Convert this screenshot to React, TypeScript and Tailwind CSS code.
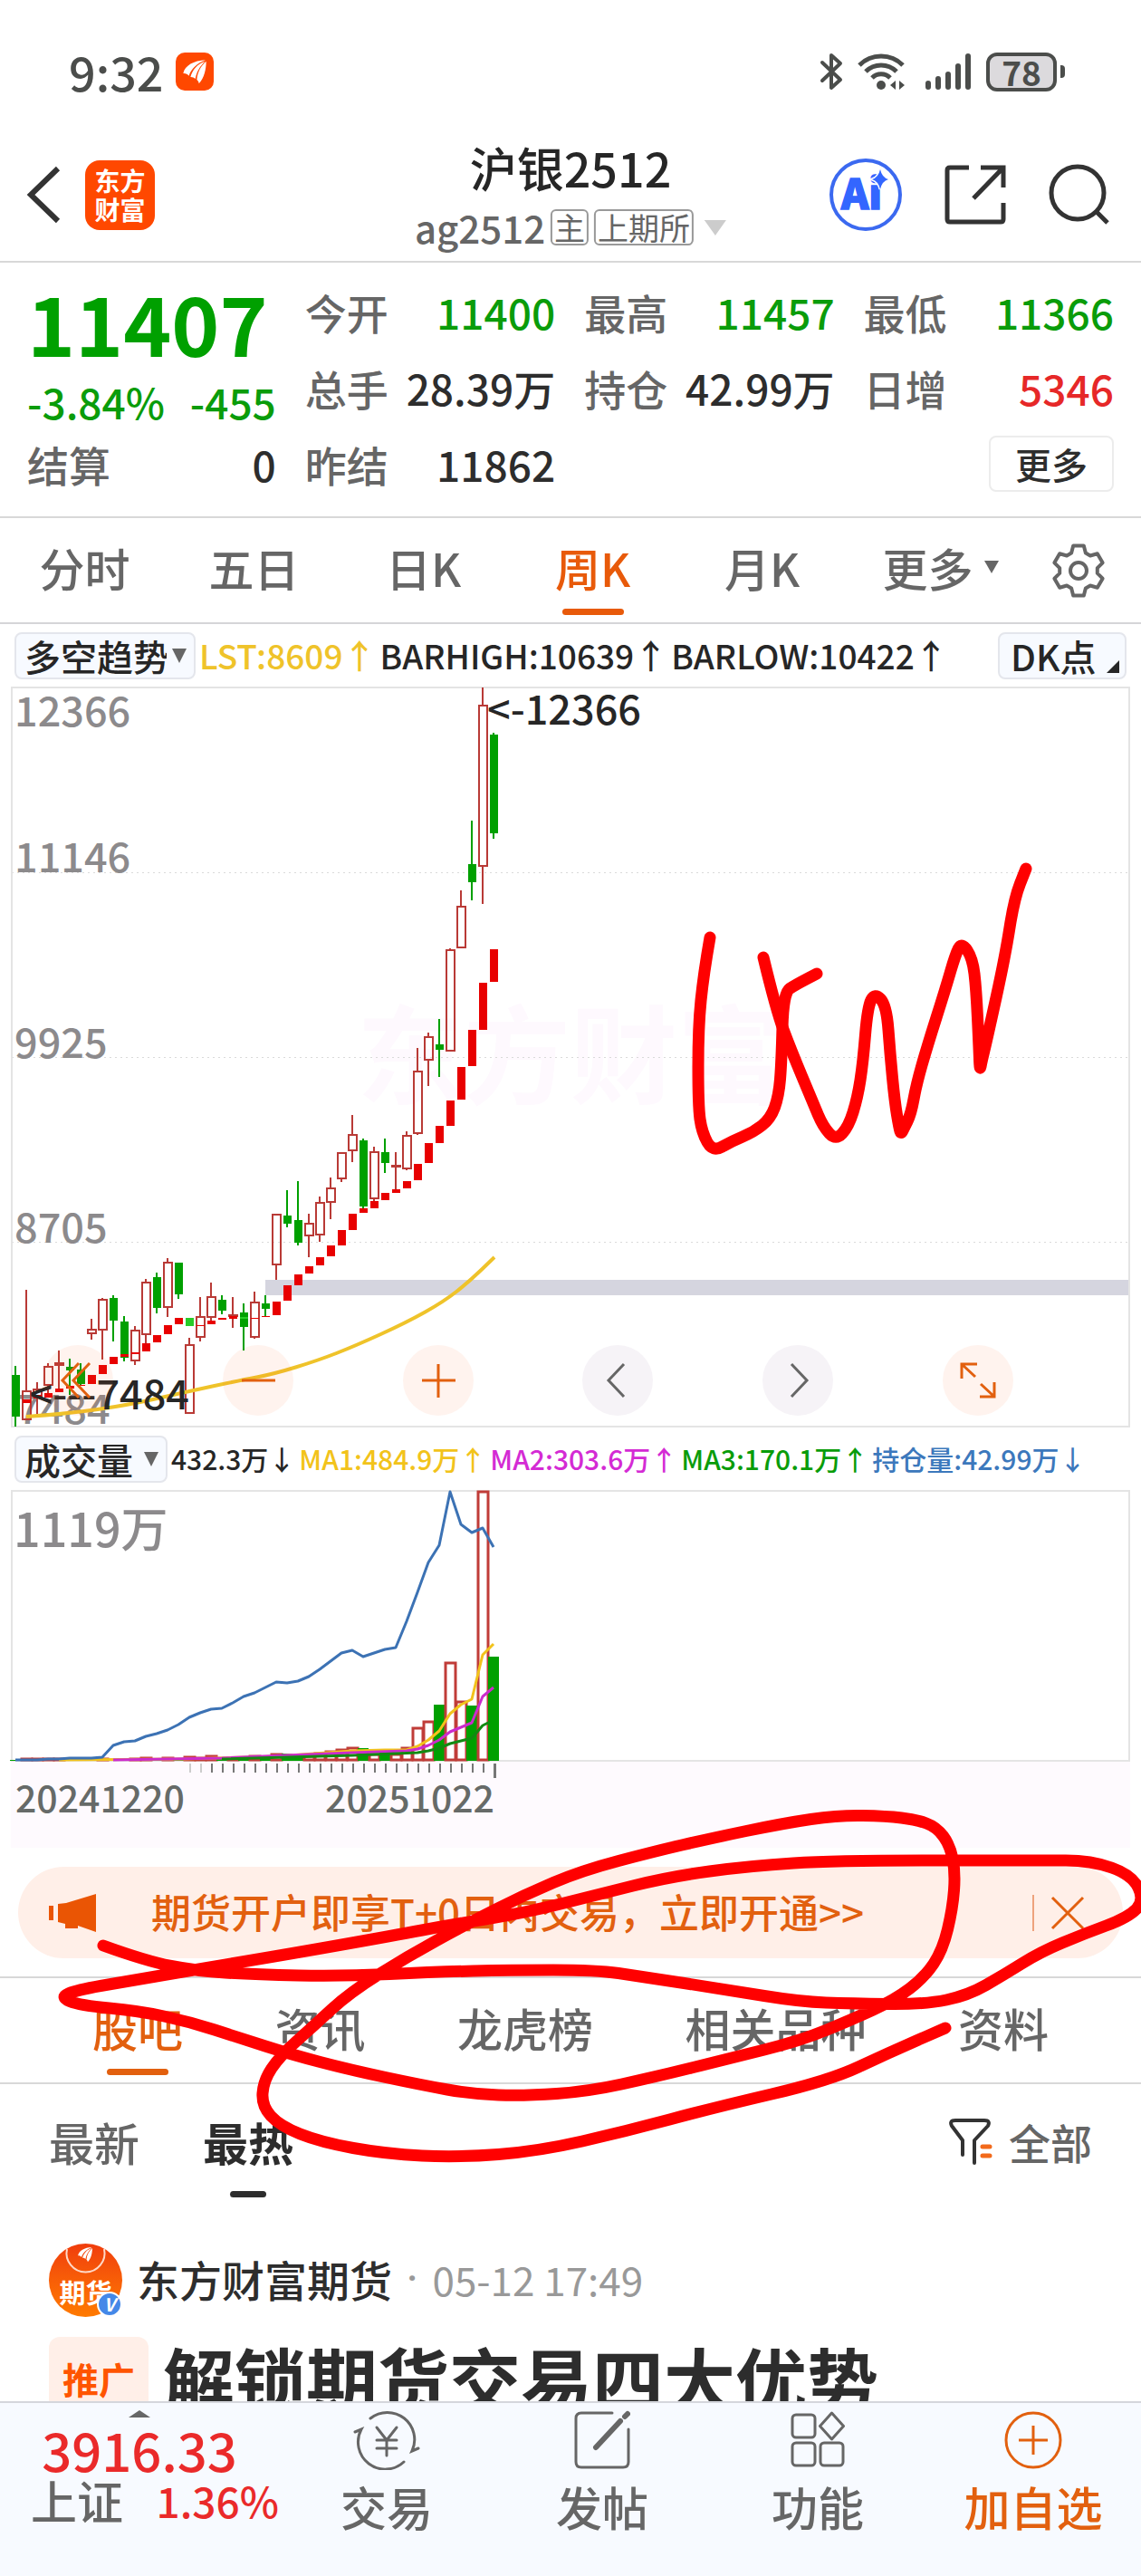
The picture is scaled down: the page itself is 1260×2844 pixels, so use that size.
import React, { useState } from 'react';

type Point = [number, number];
// color, high, body top, body bottom, low (chart y)
type Candle = ['r' | 'g', number, number, number, number];

const STEP = 12;
const FIRST_X = 17;

const candles: Candle[] = [
  ['g', 1508, 1518, 1564, 1575],
  ['r', 1424, 1535, 1568, 1568],
  ['r', 1526, 1533, 1543, 1561],
  ['r', 1505, 1508, 1530, 1538],
  ['r', 1491, 1504, 1508, 1533],
  ['g', 1500, 1509, 1513, 1540],
  ['g', 1505, 1512, 1528, 1530],
  ['r', 1456, 1467, 1473, 1479],
  ['r', 1433, 1434, 1469, 1501],
  ['g', 1430, 1433, 1458, 1481],
  ['g', 1453, 1459, 1499, 1503],
  ['r', 1464, 1468, 1503, 1507],
  ['r', 1412, 1415, 1474, 1483],
  ['g', 1405, 1410, 1444, 1450],
  ['r', 1389, 1393, 1444, 1454],
  ['g', 1394, 1394, 1429, 1434],
  ['r', 1477, 1484, 1561, 1561],
  ['r', 1432, 1453, 1477, 1481],
  ['r', 1416, 1431, 1455, 1458],
  ['g', 1430, 1435, 1447, 1451],
  ['r', 1432, 1451, 1454, 1466],
  ['g', 1439, 1449, 1465, 1491],
  ['r', 1426, 1437, 1477, 1478],
  ['g', 1430, 1439, 1445, 1453],
  ['r', 1340, 1340, 1397, 1413],
  ['g', 1314, 1342, 1351, 1355],
  ['g', 1304, 1347, 1372, 1375],
  ['r', 1340, 1350, 1365, 1388],
  ['r', 1321, 1327, 1364, 1371],
  ['r', 1300, 1311, 1328, 1346],
  ['r', 1272, 1272, 1302, 1305],
  ['r', 1231, 1252, 1271, 1283],
  ['g', 1257, 1259, 1332, 1335],
  ['r', 1266, 1271, 1324, 1328],
  ['g', 1257, 1272, 1284, 1295],
  ['r', 1272, 1286, 1288, 1313],
  ['r', 1249, 1253, 1291, 1292],
  ['r', 1157, 1182, 1252, 1253],
  ['r', 1140, 1144, 1171, 1199],
  ['g', 1125, 1153, 1159, 1189],
  ['r', 1047, 1048, 1161, 1161],
  ['r', 983, 1000, 1047, 1047],
  ['g', 906, 954, 974, 994],
  ['r', 759, 778, 957, 998],
  ['g', 809, 811, 920, 926],
];

// trend blocks, starting at the second week
const trend: Point[] = [
  [1545, 1549], [1540, 1544], [1538, 1543], [1533, 1537], [1530, 1533], [1529, 1530],
  [1518, 1528], [1507, 1517], [1498, 1506], [1495, 1498], [1493, 1495], [1483, 1492],
  [1474, 1482], [1463, 1473], [1455, 1462], [1455, 1464], [1463, 1464], [1458, 1462],
  [1455, 1457], [1453, 1456], [1454, 1456], [1455, 1456], [1453, 1454], [1437, 1452],
  [1419, 1436], [1407, 1419], [1398, 1406], [1388, 1397], [1375, 1387], [1358, 1375],
  [1340, 1358], [1334, 1339], [1326, 1334], [1317, 1325], [1313, 1317], [1304, 1312],
  [1285, 1303], [1262, 1284], [1243, 1262], [1215, 1243], [1178, 1214], [1137, 1177],
  [1085, 1137], [1048, 1084],
];

const lst: Point[] = [
  [29, 1564], [73, 1561], [143, 1551], [204, 1537], [265, 1524], [302, 1517], [351, 1502],
  [392, 1486], [449, 1460], [490, 1437], [518, 1415], [546, 1388],
];

const volumes = [
  1943, 1942, 1942, 1942, 1942, 1943, 1943, 1943, 1942, 1942, 1942, 1942, 1941, 1942, 1941,
  1942, 1940, 1941, 1939, 1940, 1941, 1940, 1939, 1941, 1937, 1936, 1938, 1939, 1936, 1934,
  1932, 1930, 1930, 1937, 1935, 1937, 1930, 1908, 1901, 1882, 1836, 1879, 1883, 1647, 1829,
];

const holding = [
  1943, 1943, 1943, 1942, 1942, 1941, 1941, 1941, 1940, 1927, 1923, 1922, 1917, 1914, 1910,
  1904, 1896, 1891, 1887, 1886, 1880, 1873, 1869, 1863, 1857, 1858, 1856, 1851, 1843, 1834,
  1825, 1822, 1829, 1825, 1821, 1819, 1790, 1758, 1725, 1706, 1647, 1683, 1692, 1687, 1708,
];

const volumeMa: { color: string; points: Point[] }[] = [
  {
    color: '#f2c31b',
    points: [[65, 1943], [200, 1942], [305, 1939], [389, 1933], [425, 1932], [449, 1932], [461, 1928], [473, 1921],
      [485, 1911], [497, 1892], [509, 1882], [521, 1876], [533, 1827], [545, 1815]],
  },
  {
    color: '#cc2bcc',
    points: [[125, 1943], [245, 1941], [389, 1935], [449, 1933], [461, 1931], [473, 1927], [485, 1921],
      [497, 1912], [509, 1907], [521, 1902], [533, 1873], [545, 1863]],
  },
  {
    color: '#128a12',
    points: [[245, 1942], [389, 1938], [461, 1935], [473, 1933], [485, 1930], [497, 1925], [509, 1922],
      [521, 1919], [533, 1905], [541, 1901]],
  },
];

const strokes: Point[][] = [
  [[784, 1035], [777, 1075], [771, 1134], [771, 1221], [775, 1250], [787, 1272], [808, 1260], [832, 1250],
    [851, 1235], [860, 1210], [863, 1173], [865, 1096], [879, 1087], [902, 1075]],
  [[843, 1057], [857, 1115], [873, 1158], [898, 1218], [909, 1244], [923, 1259], [937, 1244], [947, 1212],
    [953, 1173], [958, 1112], [966, 1096], [979, 1110], [983, 1164], [988, 1216], [993, 1246], [995, 1252],
    [998, 1246], [1006, 1230], [1012, 1197], [1024, 1155], [1044, 1092], [1055, 1054], [1062, 1040],
    [1074, 1058], [1078, 1092], [1081, 1155], [1082, 1183], [1084, 1172], [1090, 1147], [1110, 1056],
    [1120, 992], [1133, 959]],
  [[114, 2148], [161, 2165], [217, 2176], [281, 2180], [378, 2182], [482, 2177], [563, 2175], [659, 2175],
    [707, 2182], [804, 2197], [884, 2210], [940, 2212], [1021, 2213], [1069, 2203], [1109, 2180],
    [1149, 2155], [1197, 2135], [1246, 2117], [1264, 2098], [1250, 2070], [1205, 2054], [1149, 2054],
    [924, 2054], [828, 2060], [739, 2072], [659, 2092], [579, 2112], [498, 2125], [434, 2137], [321, 2157],
    [225, 2173], [137, 2188], [85, 2197], [66, 2205], [88, 2214], [153, 2220], [209, 2232], [265, 2250],
    [321, 2268], [386, 2285], [466, 2302], [522, 2312], [579, 2314], [650, 2309], [723, 2293], [804, 2273],
    [884, 2253], [940, 2230], [988, 2208], [1021, 2183], [1041, 2153], [1052, 2107], [1055, 2067],
    [1049, 2037], [1034, 2017], [1012, 2009], [979, 2005], [926, 2004], [865, 2013], [783, 2030],
    [723, 2044], [643, 2065], [579, 2092], [514, 2125], [450, 2160], [386, 2200], [346, 2237], [309, 2270],
    [291, 2297], [289, 2325], [309, 2347], [354, 2365], [426, 2378], [506, 2382], [595, 2375], [691, 2353],
    [788, 2327], [916, 2297], [980, 2267], [1044, 2239]],
];

const smooth = (points: Point[]) => {
  let d = `M${points[0][0]} ${points[0][1]}`;
  for (let i = 1; i < points.length - 1; i++) {
    const [x, y] = points[i];
    const [nx, ny] = points[i + 1];
    d += ` Q${x} ${y} ${(x + nx) / 2} ${(y + ny) / 2}`;
  }
  const last = points[points.length - 1];
  return `${d} L${last[0]} ${last[1]}`;
};

const polyline = (points: Point[]) => points.map((p) => p.join(',')).join(' ');

const quotes = [
  { label: '今开', value: '11400', color: 'text-[#0a9c0a]' },
  { label: '最高', value: '11457', color: 'text-[#0a9c0a]' },
  { label: '最低', value: '11366', color: 'text-[#0a9c0a]' },
  { label: '总手', value: '28.39万', color: 'text-[#2d2d2d]' },
  { label: '持仓', value: '42.99万', color: 'text-[#2d2d2d]' },
  { label: '日增', value: '5346', color: 'text-[#e62828]' },
  { label: '昨结', value: '11862', color: 'text-[#2d2d2d]' },
];

const periods = ['分时', '五日', '日K', '周K', '月K'];
const sections = ['股吧', '资讯', '龙虎榜', '相关品种', '资料'];

const Flame = ({ className }: { className: string }) => (
  <svg viewBox="0 0 24 24" className={className} fill="#fff" aria-hidden="true">
    <path d="M2.5 13.5C4 7 11 3 21 2.5 14 5 9 10 7.2 15.500 6 14 4.500 13.300 2.500 13.500z" />
    <path d="M8.500 16.500C10 10.500 14.500 5.500 20.500 3.500 16.500 7.500 13.500 12 12.500 18 11.500 17 10 16.400 8.500 16.500z" />
    <path d="M13.800 18.800C14.200 12.500 17 7.500 21.500 3.500 21.500 10 20 17 15.500 22 15.500 20.800 14.800 19.600 13.800 18.800z" />
  </svg>
);

const Caret = ({ className }: { className: string }) => (
  <svg viewBox="0 0 16 14" preserveAspectRatio="none" className={className} fill="currentColor" aria-hidden="true">
    <path d="M0 0h16L8 14z" />
  </svg>
);

const Gear = () => {
  const points: string[] = [];
  for (let k = 0; k < 6; k++) {
    [[-22, 21], [-12, 28], [12, 28], [22, 21]].forEach(([offset, r]) => {
      const a = ((k * 60 - 90 + offset) * Math.PI) / 180;
      points.push(`${30 + r * Math.cos(a)},${30 + r * Math.sin(a)}`);
    });
  }
  return (
    <svg viewBox="0 0 60 60" className="size-[60px]" fill="none" stroke="#666" strokeWidth="4" strokeLinejoin="round">
      <polygon points={points.join(' ')} />
      <circle cx="30" cy="30" r="9" />
    </svg>
  );
};

const StatusBar = () => (
  <div className="flex h-[158px] items-center justify-between pr-[84px] pl-[76px]">
    <div className="flex items-center gap-[14px]">
      <span className="text-[52px] leading-[64px] text-[#4b4d4b]">9:32</span>
      <span className="flex size-[42px] items-center justify-center rounded-[10px] bg-[#ff4800]">
        <Flame className="size-[32px]" />
      </span>
    </div>
    <div className="flex items-center text-[#4b4d4b]">
      <svg viewBox="0 0 26 42" className="mr-4 h-[42px] w-[26px]" fill="none" stroke="currentColor" strokeWidth="4" strokeLinecap="round" strokeLinejoin="round">
        <path d="M3 11l20 19-10 9V3l10 9L3 31" />
      </svg>
      <svg viewBox="0 0 52 42" className="mr-[22px] h-[42px] w-[52px]" fill="none" stroke="currentColor" strokeWidth="5">
        <path d="M2 14a34 34 0 0 1 48 0" />
        <path d="M9 21a24 24 0 0 1 34 0" />
        <path d="M16 28a14 14 0 0 1 20 0" />
        <circle cx="26" cy="36" r="5" fill="currentColor" stroke="none" />
        <path d="M42 31v10l-6-5zM46 41V31l6 5z" fill="currentColor" stroke="none" />
      </svg>
      <svg viewBox="0 0 52 42" className="mr-4 h-[42px] w-[52px]" stroke="currentColor" strokeWidth="6" strokeLinecap="round">
        <path d="M4 34v4M15 29v9M26 24v14M37 15v23M48 4v34" />
      </svg>
      <span className="flex h-[43px] w-[78px] items-center justify-center rounded-[12px] border-[4px] border-current bg-[#dcdadd] text-[37px] leading-[36px] font-bold">
        78
      </span>
      <span className="ml-1 h-[14px] w-[5px] rounded-r bg-current" />
    </div>
  </div>
);

const Header = () => (
  <header className="relative flex h-[132px] items-center justify-between border-b-2 border-[#d8d8d8] pr-[35px] pb-4 pl-[26px]">
    <div className="flex items-center gap-6">
      <button aria-label="返回">
        <svg viewBox="0 0 44 64" className="h-[64px] w-[44px]" fill="none" stroke="#333" strokeWidth="6">
          <path d="M38 3L8 32l30 29" />
        </svg>
      </button>
      <span className="flex size-[77px] flex-col items-center justify-center rounded-[16px] bg-[#ff4800] text-[28px] leading-[32px] font-bold text-white">
        <span>东方</span>
        <span>财富</span>
      </span>
    </div>
    <div className="absolute top-[-7px] left-1/2 flex -translate-x-1/2 flex-col items-center whitespace-nowrap">
      <h1 className="text-[52px] leading-[68px] text-[#262626]">沪银2512</h1>
      <button className="flex items-center text-[42px] leading-[64px] text-[#666]">
        ag2512
        <span className="ml-[6px] rounded-[6px] border-2 border-[#999] px-[2px] text-[34px] leading-[36px] font-normal">主</span>
        <span className="ml-[6px] rounded-[6px] border-2 border-[#999] px-[2px] text-[34px] leading-[36px] font-normal">上期所</span>
        <Caret className="ml-3 h-[17px] w-[24px] text-[#ccc]" />
      </button>
    </div>
    <div className="flex items-center gap-[46px]">
      <button aria-label="Ai">
        <svg viewBox="0 0 82 82" className="size-[82px]">
          <circle cx="41" cy="41" r="38" fill="none" stroke="#3b69f0" strokeWidth="4" />
          <text x="14" y="57" fontSize="46" fontWeight="900" fill="#3366ff" stroke="#3366ff" strokeWidth="1.500">Ai</text>
          <path d="M57 13q2 9 9 11-7 2-9 11-2-9-9-11 7-2 9-11z" fill="#3366ff" stroke="#fff" strokeWidth="3" paintOrder="stroke" />
        </svg>
      </button>
      <button aria-label="分享">
        <svg viewBox="0 0 68 68" className="size-[68px]" fill="none" stroke="#333" strokeWidth="5">
          <path d="M27 4H6q-3 0-3 3v54q0 3 3 3h56q3 0 3-3V43M40 4h25v22M65 4L32 38" />
        </svg>
      </button>
      <button aria-label="搜索">
        <svg viewBox="0 0 68 68" className="size-[68px]" fill="none" stroke="#333" strokeWidth="5">
          <circle cx="33" cy="32" r="29" />
          <path d="M53 52l13 13" />
        </svg>
      </button>
    </div>
  </header>
);

const Quote = () => (
  <section className="flex gap-8 border-b-2 border-[#d8d8d8] px-[30px] pt-3 pb-4 text-[46px] text-[#666]">
    <div className="min-w-0 flex-1">
      <div className="text-[90px] leading-[106px] font-bold text-[#00a000]">11407</div>
      <div className="flex justify-between leading-[70px] whitespace-nowrap text-[#0a9c0a]">
        <span>-3.84%</span>
        <span>-455</span>
      </div>
      <dl className="flex justify-between leading-[68px]">
        <dt>结算</dt>
        <dd className="text-[#2d2d2d]">0</dd>
      </dl>
    </div>
    <div className="grid min-w-0 flex-[3.25] grid-cols-3 gap-x-8">
      {quotes.map((item) => (
        <dl key={item.label} className="flex justify-between leading-[84px] whitespace-nowrap">
          <dt>{item.label}</dt>
          <dd className={item.color}>{item.value}</dd>
        </dl>
      ))}
      <div className="col-start-3 flex items-center justify-end">
        <button className="h-[62px] w-[138px] rounded-[8px] border-2 border-[#ececec] text-[40px] leading-[56px] text-[#2d2d2d]">更多</button>
      </div>
    </div>
  </section>
);

const Periods = () => {
  const [active, setActive] = useState('周K');
  return (
    <nav className="grid grid-cols-[repeat(6,1fr)_138px] border-b-2 border-[#d5d5d8] text-[50px] leading-[108px] text-[#666]">
      {periods.map((p) => (
        <button key={p} onClick={() => setActive(p)} className={`flex h-[115px] flex-col items-center ${p === active ? 'text-[#e85a0a]' : ''}`}>
          {p}
          <span className={`-mt-2 h-[7px] w-[68px] shrink-0 rounded-full ${p === active ? 'bg-[#e85a0a]' : ''}`} />
        </button>
      ))}
      <button className="flex h-[108px] items-center justify-center gap-3 pl-5">
        更多
        <Caret className="h-[14px] w-[16px]" />
      </button>
      <button aria-label="设置" className="flex items-center justify-center">
        <Gear />
      </button>
    </nav>
  );
};

const ChartButton = ({ label, d, gray }: { label: string; d: string; gray?: boolean }) => (
  <button aria-label={label} className={`size-[78px] rounded-full ${gray ? 'bg-[#f6f3f7]' : 'bg-[#ff6420]/8'}`}>
    <svg viewBox="0 0 78 78" className="size-full" fill="none" stroke={gray ? '#666' : '#e2600f'} strokeWidth="3">
      <path d={d} />
    </svg>
  </button>
);

const PriceChart = () => (
  <div className="relative">
    <svg viewBox="0 758 1260 818" className="block w-full" fontSize="45">
      <text x="630" y="1210" fontSize="118" fontWeight="700" textAnchor="middle" fill="#fef9fe">东方财富</text>
      <g stroke="#dadada" strokeDasharray="2 4">
        <path d="M13 963.500H1247M13 1167.500H1247M13 1371.500H1247" />
      </g>
      <rect x="13" y="759" width="1234" height="816" fill="none" stroke="#e4e4e4" strokeWidth="2" />
      <g fill="#8c8a8c">
        <text x="16" y="802">12366</text>
        <text x="16" y="963">11146</text>
        <text x="16" y="1168">9925</text>
        <text x="16" y="1372">8705</text>
        <text x="19" y="1572">7484</text>
      </g>
      <rect x="293" y="1413" width="953" height="17" fill="#d5d5df" />
      {candles.map(([color, high, top, bottom, low], i) => {
        const x = FIRST_X + i * STEP;
        return color === 'g' ? (
          <g key={i} fill="#00a000">
            <rect x={x - 1} y={high} width="2" height={low - high} />
            <rect x={x - 4} y={top} width="9" height={bottom - top} />
          </g>
        ) : (
          <g key={i} stroke="#b93a36" strokeWidth="2" fill="none">
            <path d={`M${x} ${high}V${top}M${x} ${bottom}V${low}`} />
            <rect x={x - 4} y={top + 1} width="9" height={Math.max(bottom - top - 2, 1)} />
          </g>
        );
      })}
      {trend.map(([top, bottom], i) => (
        <rect key={i} x={FIRST_X + (i + 1) * STEP - 4} y={top} width="9" height={bottom - top} fill={i === 15 || i === 20 ? '#28cc28' : '#e80000'} />
      ))}
      <path d={smooth(lst)} fill="none" stroke="#efc32a" strokeWidth="4" />
      <g fill="#262626">
        <text x="538" y="800">&lt;-12366</text>
        <text x="209" y="1556" textAnchor="end">&lt;---7484</text>
      </g>
    </svg>
    <div className="absolute right-[141px] bottom-[13px] left-[47px] flex justify-between">
      <ChartButton label="最早" d="M40 20L22 39l18 19M52 20L34 39l18 19" />
      <ChartButton label="缩小" d="M21 39h37" />
      <ChartButton label="放大" d="M21 39h37M39 21v37" />
      <ChartButton label="左移" d="M46 21L29 39l17 18" gray />
      <ChartButton label="右移" d="M32 21l17 18-17 18" gray />
      <ChartButton label="全屏" d="M36 35L22 22M21 37V21h17M42 43l14 13M57 41v16H41" />
    </div>
  </div>
);

const VolumeChart = () => (
  <svg viewBox="0 1645 1260 395" className="block w-full">
    <rect x="12" y="1945" width="1236" height="95" fill="#fefafe" />
    <rect x="13" y="1646" width="1234" height="298" fill="none" stroke="#e4e4e4" strokeWidth="2" />
    <text x="15" y="1708" fontSize="52" fill="#8c8a8c">1119万</text>
    {volumes.map((top, i) => {
      const x = FIRST_X + i * STEP;
      return candles[i][0] === 'g' ? (
        <rect key={i} x={x - 6} y={top} width="12" height={1944 - top} fill="#00a000" />
      ) : (
        <rect key={i} x={x - 5} y={top} width="11" height={1943 - top} fill="none" stroke="#c03c38" strokeWidth="3" />
      );
    })}
    <g fill="none" strokeWidth="3" strokeLinejoin="round">
      {volumeMa.map((ma) => (
        <polyline key={ma.color} points={polyline(ma.points)} stroke={ma.color} />
      ))}
      <polyline points={polyline(holding.map((y, i) => [FIRST_X + i * STEP, y]))} stroke="#3c72b4" />
    </g>
    {Array.from({ length: 28 }, (_, i) => (
      <rect key={i} x={209 + i * STEP} y="1947" width="2" height="10" fill={i < 2 ? '#ccc' : '#777'} />
    ))}
    <rect x="545" y="1947" width="3" height="16" fill="#777" />
    <g fontSize="41" fill="#666a68">
      <text x="17" y="2001">20241220</text>
      <text x="546" y="2001" textAnchor="end">20251022</text>
    </g>
  </svg>
);

const PickerBox = ({ label, value, width }: { label: string; value: string; width: string }) => (
  <label className="flex h-[52px] shrink-0 items-center gap-[6px] rounded-[8px] border-2 border-[#e4e6ec] bg-[#f7faff] pr-2 pl-[9px] text-[40px] text-[#262626]">
    <select aria-label={label} defaultValue={value} className={`appearance-none bg-transparent leading-[48px] outline-none ${width}`}>
      <option>{value}</option>
    </select>
    <Caret className="h-[16px] w-[16px] text-[#666]" />
  </label>
);

const Promo = () => (
  <div className="mx-5 mt-[21px] mb-5 flex h-[101px] items-center rounded-full bg-[#ffefe8] pr-[42px] pl-[34px] text-[#e2600f]">
    <svg viewBox="0 0 54 48" className="h-[48px] w-[54px]" fill="#ea5504" aria-hidden="true">
      <rect x="0" y="16" width="5" height="16" />
      <path d="M10 14l9-1L52 3v42l-20-7v3H18v-5l-8-2z" />
    </svg>
    <a href="#open" className="ml-[59px] flex-1 pb-1 text-[44px] leading-[60px] whitespace-nowrap">
      期货开户即享T+0日内交易，立即开通&gt;&gt;
    </a>
    <button aria-label="关闭" className="flex items-center border-l-2 border-[#eda27c] pl-[18px]">
      <svg viewBox="0 0 38 40" className="h-[40px] w-[38px]" fill="none" stroke="currentColor" strokeWidth="3">
        <path d="M2 3l34 34M36 3L2 37" />
      </svg>
    </button>
  </div>
);

const Sections = () => {
  const [active, setActive] = useState('股吧');
  return (
    <nav className="flex justify-between border-y-2 border-[#d8d8d8] px-[102px] text-[50px] leading-[108px] text-[#666]">
      {sections.map((s) => (
        <button key={s} onClick={() => setActive(s)} className={`flex h-[115px] flex-col items-center ${s === active ? 'text-[#e2600f]' : ''}`}>
          {s}
          <span className={`-mt-2 h-[7px] w-[68px] shrink-0 rounded-full ${s === active ? 'bg-[#e2600f]' : ''}`} />
        </button>
      ))}
    </nav>
  );
};

const Posts = () => (
  <section className="px-[54px]">
    <div className="flex items-start justify-between pt-3 text-[50px] leading-[102px] text-[#666]">
      <div className="flex items-start gap-[70px]">
        <button>最新</button>
        <button className="flex flex-col items-center font-bold text-[#2d2d2d]">
          最热
          <span className="mt-1 h-[7px] w-[40px] rounded-full bg-[#2d2d2d]" />
        </button>
      </div>
      <button className="flex items-center gap-4 text-[46px]">
        <svg viewBox="0 0 50 52" className="h-[52px] w-[50px]" fill="none" stroke="#333" strokeWidth="4" strokeLinejoin="round" strokeLinecap="round">
          <path d="M15 41V25L3 9q-3-6 4-6h32q7 0 4 6L28 25v25" />
          <path d="M37 32h8M37 42h8" stroke="#f26a1b" strokeWidth="5" />
        </svg>
        全部
      </button>
    </div>
    <article>
      <div className="mt-[51px] flex items-center">
        <span className="relative flex size-[81px] items-end justify-center rounded-full bg-linear-to-b from-[#f03c0c] to-[#ff7a00] pb-[12px] text-[29px] leading-[32px] font-bold text-white">
          <svg viewBox="0 0 81 81" className="absolute inset-0" fill="none" stroke="#ffd9c8" strokeWidth="2" aria-hidden="true">
            <path d="M20 6a21 21 0 1 0 41 0" />
          </svg>
          <Flame className="absolute top-[2px] left-[30px] size-[20px]" />
          期货
          <span className="absolute right-0 bottom-0 flex size-[28px] items-center justify-center rounded-full border-2 border-white bg-[#4488e8] text-[20px] leading-[24px] italic">V</span>
        </span>
        <span className="ml-4 pb-1 text-[47px] leading-[60px] text-[#2d2d2d]">东方财富期货</span>
        <span className="ml-4 pb-1 font-[Roboto] text-[44px] leading-[60px] text-[#999]">·</span>
        <span className="ml-4 pb-1 text-[44px] leading-[60px] font-normal text-[#999]">05-12 17:49</span>
      </div>
      <h2 className="mt-[22px] flex items-center gap-4 text-[79px] leading-[92px] font-bold whitespace-nowrap text-[#2d2d2d]">
        <span className="flex h-[92px] w-[110px] items-center justify-center rounded-[12px] bg-[#ffefe8] text-[40px] font-bold text-[#ff5500]">推广</span>
        解锁期货交易四大优势
      </h2>
    </article>
  </section>
);

const BottomBar = () => (
  <nav className="grid h-[193px] shrink-0 grid-cols-[308px_repeat(4,1fr)] items-start border-t-2 border-[#d4d6dc] bg-[#f7faff] pt-[8px] text-[51px] leading-[64px] text-[#666]">
    <button className="flex flex-col items-center">
      <Caret className="h-[8px] w-[24px] rotate-180" />
      <span className="text-[58px] leading-[70px] text-[#ea2a2a]">3916.33</span>
      <span className="flex w-full items-center justify-between pl-[34px] leading-[42px]">
        上证
        <span className="text-[46px] text-[#ea2a2a]">1.36%</span>
      </span>
    </button>
    <button className="flex flex-col items-center gap-2">
      <svg viewBox="0 0 74 66" className="h-[66px] w-[74px]" fill="none" stroke="currentColor" strokeWidth="3" strokeLinecap="round">
        <path d="M19 9A30 30 0 0 1 65 45l7-3M56 57A30 30 0 0 1 9 21l-7 3" />
        <path d="M26 19l11 14 11-14M37 33v17M26 33h22M26 42h22" />
      </svg>
      交易
    </button>
    <button className="flex flex-col items-center gap-2">
      <svg viewBox="0 0 62 66" className="h-[66px] w-[62px]" fill="none" stroke="currentColor" strokeWidth="3" strokeLinecap="round">
        <path d="M42 3H8q-6 0-6 6v48q0 6 6 6h46q6 0 6-6V21" />
        <path d="M24 41L51 12M56 7l3-3" strokeWidth="6" />
      </svg>
      发帖
    </button>
    <button className="flex flex-col items-center gap-2">
      <svg viewBox="0 0 60 66" className="h-[66px] w-[60px]" fill="none" stroke="currentColor" strokeWidth="3">
        <rect x="2" y="5" width="25" height="25" rx="4" />
        <rect x="2" y="36" width="25" height="25" rx="4" />
        <rect x="33" y="36" width="25" height="25" rx="4" />
        <path d="M45.500 3l13 14.500-13 14.500-13-14.500z" strokeLinejoin="round" />
      </svg>
      功能
    </button>
    <button className="flex flex-col items-center gap-2 text-[#e2600f]">
      <svg viewBox="0 0 66 66" className="size-[66px]" fill="none" stroke="currentColor" strokeWidth="3">
        <circle cx="33" cy="33" r="30" />
        <path d="M17 33h32M33 17v32" />
      </svg>
      加自选
    </button>
  </nav>
);

const App: React.FC = () => (
  <div className="flex h-screen flex-col overflow-hidden bg-white font-['Noto_Sans_CJK_SC',sans-serif] font-medium">
    <main className="relative min-h-0 flex-1 overflow-hidden">
      <StatusBar />
      <Header />
      <Quote />
      <Periods />
      <div className="flex h-[69px] items-center gap-1 px-4 text-[37px] whitespace-nowrap text-[#262626]">
        <PickerBox label="主图指标" value="多空趋势" width="w-[157px]" />
        <span className="text-[#efc32a]">LST:8609↑</span>
        <span>BARHIGH:10639↑</span>
        <span>BARLOW:10422↑</span>
        <button className="relative ml-auto h-[52px] w-[142px] rounded-[8px] border-2 border-[#e4e6ec] bg-[#f7faff] pl-3 text-left text-[40px] leading-[48px]">
          DK点
          <svg viewBox="0 0 14 14" className="absolute right-[6px] bottom-[5px] size-[14px]" fill="currentColor">
            <path d="M14 0v14H0z" />
          </svg>
        </button>
      </div>
      <PriceChart />
      <div className="flex h-[69px] items-center gap-1 pl-4 text-[30px] whitespace-nowrap text-[#262626]">
        <PickerBox label="副图指标" value="成交量" width="w-[126px]" />
        <span>432.3万↓</span>
        <span className="text-[#f2c31b]">MA1:484.9万↑</span>
        <span className="text-[#d42bd4]">MA2:303.6万↑</span>
        <span className="text-[#0a9c0a]">MA3:170.1万↑</span>
        <span className="text-[#3c78bc]">持仓量:42.99万↓</span>
      </div>
      <VolumeChart />
      <Promo />
      <Sections />
      <Posts />
      {/* hand-drawn marks */}
      <svg viewBox="0 0 1260 2652" className="pointer-events-none absolute top-0 left-0 w-full" fill="none" stroke="#ff0000" strokeWidth="13" strokeLinecap="round" strokeLinejoin="round">
        {strokes.map((points, i) => (
          <path key={i} d={smooth(points)} />
        ))}
      </svg>
    </main>
    <BottomBar />
  </div>
);

export default App;
